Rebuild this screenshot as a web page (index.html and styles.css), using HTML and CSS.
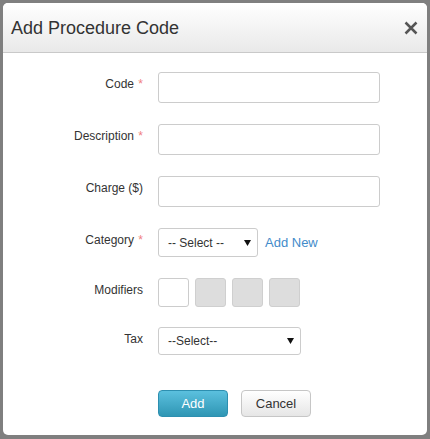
FILE: index.html
```html
<!DOCTYPE html>
<html>
<head>
<meta charset="utf-8">
<link rel="stylesheet" href="styles.css">
</head>
<body>
<div class="modal">
  <div class="modal-header">
    <h3 class="modal-title">Add Procedure Code</h3>
    <span class="close" aria-label="Close">
      <svg width="14" height="14" viewBox="0 0 14 14"><path d="M1.5 1.5 L12.5 12.5 M12.5 1.5 L1.5 12.5" stroke="#555" stroke-width="2.5" stroke-linecap="butt" fill="none"/></svg>
    </span>
  </div>
  <form class="modal-body">
    <div class="row">
      <label class="label">Code <span class="req">*</span></label>
      <input class="input" type="text">
    </div>
    <div class="row">
      <label class="label">Description <span class="req">*</span></label>
      <input class="input" type="text">
    </div>
    <div class="row">
      <label class="label">Charge ($)</label>
      <input class="input" type="text">
    </div>
    <div class="row">
      <label class="label">Category <span class="req">*</span></label>
      <div class="select select-cat">
        <span class="select-text">-- Select --</span>
        <svg class="arrow" width="7" height="6" viewBox="0 0 7 6"><path d="M0 0 H7 L3.5 6 Z" fill="#111"/></svg>
      </div>
      <a class="add-new" href="#">Add New</a>
    </div>
    <div class="row row-mod">
      <label class="label">Modifiers</label>
      <div class="mods">
        <input class="mod" type="text">
        <input class="mod mod-dis" type="text" disabled>
        <input class="mod mod-dis" type="text" disabled>
        <input class="mod mod-dis" type="text" disabled>
      </div>
    </div>
    <div class="row">
      <label class="label">Tax</label>
      <div class="select select-tax">
        <span class="select-text">--Select--</span>
        <svg class="arrow" width="7" height="6" viewBox="0 0 7 6"><path d="M0 0 H7 L3.5 6 Z" fill="#111"/></svg>
      </div>
    </div>
    <div class="actions">
      <button type="button" class="btn btn-add">Add</button>
      <button type="button" class="btn btn-cancel">Cancel</button>
    </div>
  </form>
</div>
</body>
</html>
```
FILE: styles.css
```css
html, body {
  margin: 0;
  padding: 0;
}
body {
  background: #7f7f7f;
  padding: 3px 3px 4px 3px;
  font-family: "Liberation Sans", Arial, sans-serif;
  color: #333;
}
.modal {
  width: 424px;
  height: 432px;
  background: #fff;
  border-radius: 5px;
  overflow: hidden;
  box-sizing: border-box;
}
.modal-header {
  height: 50px;
  box-sizing: border-box;
  border-bottom: 1px solid #c9c9c9;
  background: linear-gradient(#ffffff, #e9e9e9);
  display: flex;
  align-items: center;
  justify-content: space-between;
  padding: 0 9px 0 8px;
}
.modal-title {
  margin: 0;
  font-size: 18px;
  font-weight: normal;
  color: #333;
  line-height: 20px;
  padding-top: 1px;
}
.close {
  display: flex;
  width: 14px;
  height: 14px;
  margin-top: 1px;
}
.modal-body {
  margin: 0;
  padding: 19px 0 0 0;
}
.row {
  display: flex;
  align-items: flex-start;
  margin-bottom: 21px;
}
.row-mod {
  margin-bottom: 20px;
}
.label {
  width: 140px;
  flex: none;
  text-align: right;
  font-size: 12px;
  line-height: 18px;
  padding-top: 3px;
  margin-right: 15px;
  color: #333;
}
.req {
  color: #f08080;
  margin-left: 1px;
}
.input {
  width: 222px;
  height: 31px;
  box-sizing: border-box;
  border: 1px solid #ccc;
  border-radius: 3px;
  margin: 0;
  padding: 0 8px;
  font-family: "Liberation Sans", Arial, sans-serif;
  font-size: 12px;
  background: #fff;
}
.select {
  position: relative;
  box-sizing: border-box;
  border: 1px solid #ccc;
  border-radius: 3px;
  background: #fff;
  display: flex;
  align-items: center;
  padding-left: 9px;
  font-size: 12px;
  color: #333;
}
.select-cat {
  width: 100px;
  height: 29px;
}
.select-tax {
  width: 143px;
  height: 28px;
}
.select-text {
  line-height: 14px;
}
.arrow {
  position: absolute;
  right: 6px;
  top: 50%;
  margin-top: -3px;
}
.add-new {
  font-size: 13px;
  color: #428bca;
  text-decoration: none;
  line-height: 29px;
  margin-left: 7px;
}
.mods {
  display: flex;
  gap: 6px;
}
.mod {
  width: 31px;
  height: 29px;
  box-sizing: border-box;
  border: 1px solid #ccc;
  border-radius: 3px;
  margin: 0;
  padding: 0;
  background: #fff;
}
.mod-dis {
  background: #dddddd;
  border-color: #cfcfcf;
}
.actions {
  display: flex;
  padding-left: 155px;
  padding-top: 14px;
  gap: 13px;
}
.btn {
  width: 70px;
  height: 27px;
  box-sizing: border-box;
  border-radius: 4px;
  font-family: "Liberation Sans", Arial, sans-serif;
  font-size: 13px;
  margin: 0;
  padding: 0;
  cursor: pointer;
}
.btn-add {
  color: #fff;
  background: linear-gradient(#5bc0de, #2f96b4);
  border: 1px solid #2d8fb0;
}
.btn-cancel {
  color: #333;
  background: linear-gradient(#ffffff, #e6e6e6);
  border: 1px solid #c6c6c6;
}
```
